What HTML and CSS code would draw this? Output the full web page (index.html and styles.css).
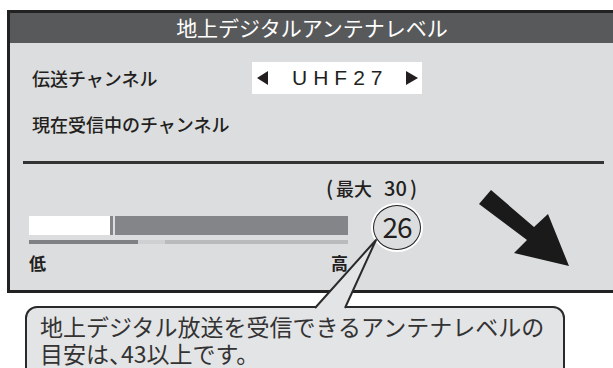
FILE: index.html
```html
<!DOCTYPE html>
<html>
  <head>
    <title>地上デジタルアンテナレベル</title>
    <meta name="viewport" content="width=device-width, initial-scale=1.0" />
    <link rel="stylesheet" href="styles.css">
  </head>
  <body>
    <div class="page">
      <div class="panel">
        <h1 class="title">地上デジタルアンテナレベル</h1>

        <div class="row first">
          <span class="label">伝送チャンネル</span>
          <div class="channel">
            <span class="tri left"></span>
            <span class="channel-name">UHF27</span>
            <span class="tri right"></span>
          </div>
        </div>
        <div class="row second">
          <span class="label">現在受信中のチャンネル</span>
        </div>

        <hr class="divider">

        <div class="level">
          <div class="meter-grid">
            <div class="max"><span class="open">(</span>最大<span class="num">30</span><span class="close">)</span></div>
            <div class="meter">
              <div class="bar">
                <div class="bar-now"></div>
                <div class="bar-mark"></div>
                <div class="bar-rest"></div>
              </div>
              <div class="scale">
                <div class="scale-low"></div>
                <div class="scale-gap"></div>
                <div class="scale-high"></div>
              </div>
              <div class="ends">
                <span>低</span>
                <span>高</span>
              </div>
            </div>
            <div class="reading">26</div>
          </div>

          <svg class="arrow" width="92" height="78" viewBox="0 0 92 78">
            <polygon points="13,1 56,38 70,25 91,77 36,64 49,51 1,15" fill="#1a1a1a" />
          </svg>
        </div>
      </div>

      <div class="note">
        <p>地上デジタル放送を受信できるアンテナレベルの</p>
        <p>目安は<span class="comma">、</span>43以上です。</p>
      </div>

      <!-- callout pointer from the reading to the note -->
      <svg class="pointer" width="613" height="368" viewBox="0 0 613 368">
        <polygon points="376,240 315,309 345,309" fill="#e3e4e5" />
        <polyline points="315,308 376,240 345,308" fill="none" stroke="#2a2a2a" stroke-width="2" stroke-linejoin="round" />
      </svg>
    </div>
  </body>
</html>
```

FILE: styles.css
```css
/* Antenna level screen */
body {
  margin: 0;
  padding: 0;
  background-color: #fff;
  font-family: "Noto Sans CJK JP", "Noto Sans", sans-serif;
  color: #231f20;
  overflow: hidden;
}

.page {
  position: relative;
  width: 613px;
  height: 368px;
  overflow: hidden;
}

.panel {
  margin: 10px 0 0 7px;
  width: 604px;
  height: 277px;
  border: 3px solid #222;
  background-color: #dcdddf;
}

.title {
  margin: 0;
  height: 30px;
  line-height: 29px;
  background-color: #58595b;
  color: white;
  font-size: 21px;
  font-weight: 400;
  text-align: center;
}

.row {
  display: flex;
  align-items: center;
  padding-left: 22px;
}

.row.first {
  margin-top: 19px;
  height: 32px;
}

.row.second {
  margin-top: 17px;
  height: 26px;
}

.label {
  width: 220px;
  font-size: 18px;
  font-weight: 500;
  line-height: 26px;
}

.channel {
  display: flex;
  align-items: center;
  width: 170px;
  height: 32px;
  background-color: white;
  box-sizing: border-box;
  padding-left: 5px;
}

.tri {
  width: 0;
  height: 0;
  border-top: 7.5px solid transparent;
  border-bottom: 7.5px solid transparent;
}

.tri.left {
  border-right: 11px solid #231f20;
}

.tri.right {
  border-left: 12px solid #231f20;
}

.channel-name {
  width: 138px;
  padding-left: 24px;
  box-sizing: border-box;
  font-family: "Liberation Sans", Arial, sans-serif;
  font-size: 21px;
  letter-spacing: 6px;
  line-height: 32px;
}

.divider {
  margin: 24px 0 0 13px;
  width: 581px;
  height: 3px;
  border: none;
  background-color: #333;
}

.level {
  display: flex;
  align-items: flex-start;
  padding-left: 19px;
  margin-top: 12px;
}

.meter-grid {
  display: grid;
  grid-template-columns: 319px 25px 48px;
  grid-template-rows: 24px auto;
  row-gap: 16px;
}

.max {
  grid-column: 1 / 4;
  justify-self: end;
  display: flex;
  align-items: baseline;
  margin-right: 4px;
  font-size: 18px;
  font-weight: 500;
  line-height: 24px;
}

.max .open,
.max .close,
.max .num {
  font-size: 20px;
}

.max .open {
  margin-right: 3px;
}

.max .num {
  margin-left: 12px;
}

.max .close {
  margin-left: 3px;
}

.meter {
  grid-column: 1;
  grid-row: 2;
}

.bar {
  display: flex;
  height: 19px;
}

.bar-now {
  width: 81px;
  background-color: white;
}

.bar-mark {
  width: 3px;
  background-color: #848588;
}

.bar-rest {
  flex: 1;
  margin-left: 2px;
  background-color: #848588;
}

.scale {
  display: flex;
  height: 4px;
  margin-top: 5px;
}

.scale-low {
  width: 109px;
  background-color: #7f8083;
}

.scale-gap {
  width: 27px;
  background-color: #cfd0d2;
}

.scale-high {
  flex: 1;
  background-color: #b9babc;
}

.ends {
  display: flex;
  justify-content: space-between;
  margin-top: 9px;
  font-size: 17px;
  font-weight: 700;
  line-height: 20px;
}

.reading {
  grid-column: 3;
  grid-row: 2;
  align-self: start;
  margin-top: -11px;
  width: 48px;
  height: 45px;
  box-sizing: border-box;
  border: 1.5px solid #222;
  border-radius: 50%;
  box-shadow: 0 0 0 2px #fff;
  font-size: 28px;
  font-weight: 400;
  line-height: 41px;
  text-align: center;
  letter-spacing: -1px;
}

.arrow {
  display: block;
  margin: 13px 0 0 57px;
}

.note {
  margin: 13px 0 0 25px;
  width: 540px;
  height: 80px;
  box-sizing: border-box;
  padding: 5px 10px 0 13px;
  border: 2px solid #2a2a2a;
  border-radius: 12px;
  background-color: #e3e4e5;
  font-size: 23px;
  line-height: 27px;
  color: #333;
  white-space: nowrap;
}

.note p {
  margin: 0;
}

.comma {
  display: inline-block;
  width: 12px;
  overflow: hidden;
  vertical-align: top;
}

.pointer {
  position: absolute;
  left: 0;
  top: 0;
  pointer-events: none;
}
```
